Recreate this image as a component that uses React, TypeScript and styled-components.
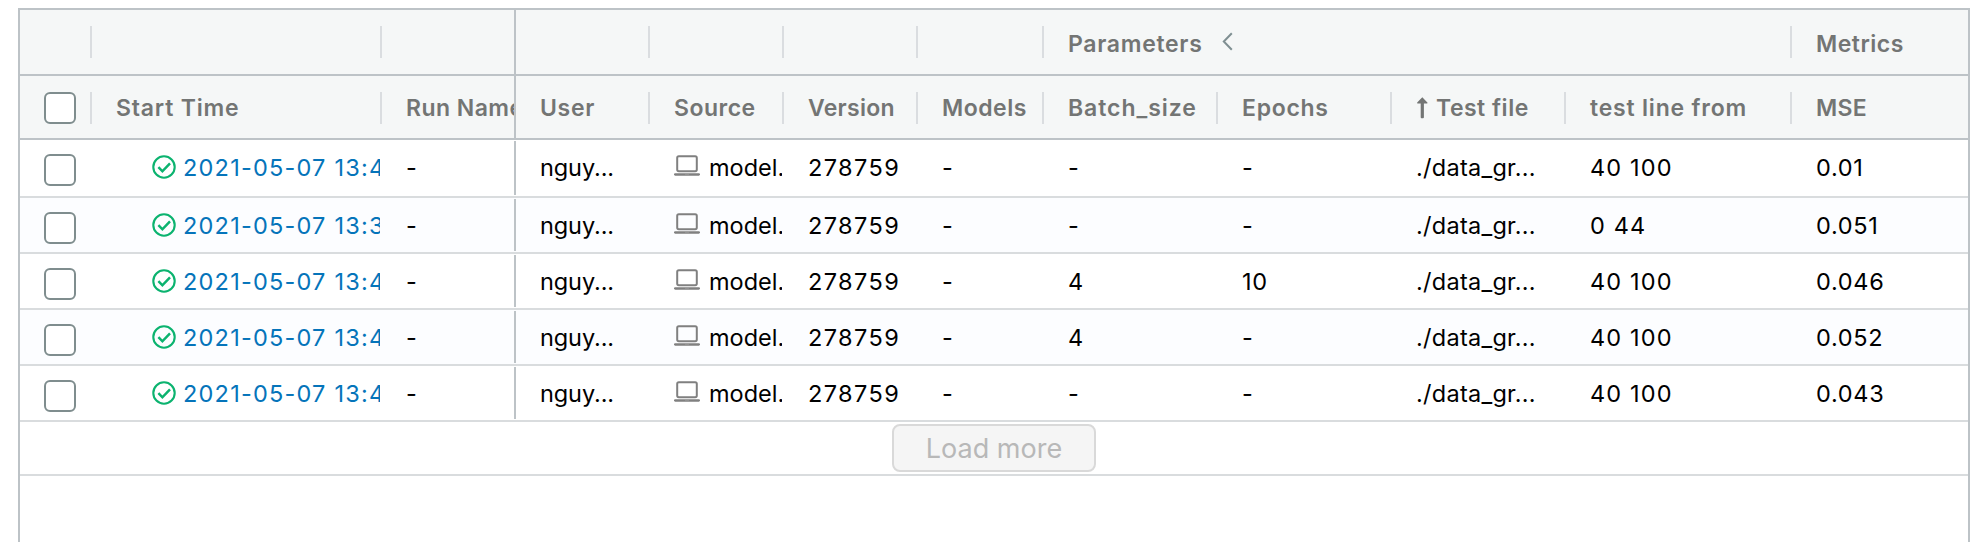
import React from 'react';
import styled, { createGlobalStyle, css } from 'styled-components';

const GlobalStyle = createGlobalStyle`
  *, *::before, *::after { box-sizing: border-box; }
  body {
    margin: 0;
    background: #fff;
    overflow: hidden;
    font-family: Inter, 'Liberation Sans', sans-serif;
  }
`;

const line = '#bdc3c7';
const softLine = '#d9dcde';
const columns = '72px 290px 134px 134px 134px 134px 126px 174px 174px 174px 226px 1fr';

const Page = styled.main`
  padding: 8px 14px 0 18px;
  height: 542px;
`;

const Grid = styled.section`
  height: 534px;
  border: 2px solid ${line};
  border-bottom: 0;
  background: #fff;
`;

const rowBase = css`
  display: grid;
  grid-template-columns: ${columns};
`;

const HeaderRow = styled.div<{ $height: number }>`
  ${rowBase}
  height: ${(p) => p.$height}px;
  border-bottom: 2px solid ${line};
  background: #f5f7f7;
  color: #737574;
  font-size: 23px;
  font-weight: 600;
`;

const HeaderCell = styled.div<{ $span?: number; $pinnedEdge?: boolean; $top?: number; $last?: boolean }>`
  grid-column: span ${(p) => p.$span ?? 1};
  display: flex;
  align-items: center;
  min-width: 0;
  overflow: hidden;
  padding-left: 24px;
  ${(p) =>
    p.$pinnedEdge &&
    css`
      border-right: 2px solid ${line};
    `}
  ${(p) =>
    !p.$pinnedEdge &&
    !p.$last &&
    css`
      &::after {
        content: '';
        flex: none;
        width: 2px;
        height: 32px;
        margin: ${p.$top ?? 0}px 0 0 auto;
        background: #dadde0;
      }
    `}
`;

const Label = styled.span<{ $tracking?: number; $drop?: number }>`
  display: flex;
  align-items: center;
  white-space: nowrap;
  line-height: 30px;
  letter-spacing: ${(p) => p.$tracking ?? 0.7}px;
  padding-top: ${(p) => p.$drop ?? 2}px;
  margin-right: -12px;
`;

const Row = styled.div<{ $first?: boolean; $striped?: boolean }>`
  ${rowBase}
  height: ${(p) => (p.$first ? 58 : 56)}px;
  border-bottom: 2px solid ${softLine};
  background: ${(p) => (p.$striped ? '#fcfdff' : '#fff')};
  color: #000;
  font-size: 23.5px;
`;

const Cell = styled.div<{ $tracking?: number; $pinnedEdge?: boolean; $inset?: number; $trim?: number }>`
  display: flex;
  min-width: 0;
  overflow: hidden;
  white-space: nowrap;
  line-height: 55px;
  padding-left: ${(p) => p.$inset ?? 24}px;
  margin-right: ${(p) => p.$trim ?? 0}px;
  letter-spacing: ${(p) => p.$tracking ?? 0}px;
  ${(p) =>
    p.$pinnedEdge &&
    css`
      margin: 1px 0;
      line-height: 53px;
      border-right: 2px solid ${line};
    `}
`;

const CheckCell = styled.div<{ $top: number }>`
  display: flex;
  justify-content: space-between;
  padding: ${(p) => p.$top}px 0 0 24px;
`;

const Checkbox = styled.span`
  width: 32px;
  height: 32px;
  border: 2px solid #7f8d8e;
  border-radius: 6px;
  background: #fff;
`;

const Separator = styled.span`
  width: 2px;
  height: 32px;
  background: #dadde0;
`;

const RunLink = styled.a`
  color: #0574ba;
  padding-left: 7px;
`;

const StatusIcon = styled.svg`
  flex: none;
  width: 24px;
  height: 24px;
  margin-top: 15px;
`;

const LaptopIcon = styled.svg`
  flex: none;
  width: 26px;
  height: 22px;
  margin: 15px 9px 0 0;
`;

const Chevron = styled.svg`
  width: 11px;
  height: 19px;
  margin: -4px 0 0 19px;
`;

const SortArrow = styled.svg`
  width: 12px;
  height: 22px;
  margin-right: 8px;
`;

const Footer = styled.div`
  display: flex;
  justify-content: center;
  height: 54px;
  padding-top: 2px;
  border-bottom: 2px solid ${softLine};
`;

const LoadMore = styled.button`
  width: 204px;
  height: 48px;
  padding: 1px 0 0;
  border: 2px solid #d9d9d9;
  border-radius: 8px;
  background: #f5f5f5;
  color: #b8b8b8;
  font: 400 27px/43px Inter, 'Liberation Sans', sans-serif;
`;

interface Run {
  start: string;
  batch: string;
  epochs: string;
  lines: string;
  mse: string;
}

const runs: Run[] = [
  { start: '2021-05-07 13:4', batch: '-', epochs: '-', lines: '40 100', mse: '0.01' },
  { start: '2021-05-07 13:3', batch: '-', epochs: '-', lines: '0 44', mse: '0.051' },
  { start: '2021-05-07 13:4', batch: '4', epochs: '10', lines: '40 100', mse: '0.046' },
  { start: '2021-05-07 13:4', batch: '4', epochs: '-', lines: '40 100', mse: '0.052' },
  { start: '2021-05-07 13:4', batch: '-', epochs: '-', lines: '40 100', mse: '0.043' },
];

const GroupHeader = () => (
  <HeaderRow $height={66}>
    <HeaderCell />
    <HeaderCell />
    <HeaderCell $pinnedEdge />
    <HeaderCell />
    <HeaderCell />
    <HeaderCell />
    <HeaderCell />
    <HeaderCell $span={4}>
      <Label $drop={3}>
        Parameters
        <Chevron viewBox="0 0 11 19" fill="none" stroke="#7f8f92" strokeWidth="2">
          <path d="M9.8 1.2 1.8 9.5l8 8.3" />
        </Chevron>
      </Label>
    </HeaderCell>
    <HeaderCell $last>
      <Label $tracking={0.5} $drop={3}>Metrics</Label>
    </HeaderCell>
  </HeaderRow>
);

const ColumnHeader = () => (
  <HeaderRow $height={64}>
    <CheckCell $top={16}>
      <Checkbox />
      <Separator />
    </CheckCell>
    <HeaderCell $top={2}><Label $tracking={0.8}>Start Time</Label></HeaderCell>
    <HeaderCell $pinnedEdge><Label $tracking={0.45}>Run Name</Label></HeaderCell>
    <HeaderCell $top={2}><Label $tracking={0.7}>User</Label></HeaderCell>
    <HeaderCell $top={2}><Label $tracking={0.5}>Source</Label></HeaderCell>
    <HeaderCell $top={2}><Label $tracking={0.3}>Version</Label></HeaderCell>
    <HeaderCell $top={2}><Label $tracking={0.5}>Models</Label></HeaderCell>
    <HeaderCell $top={2}><Label $tracking={0.95}>Batch_size</Label></HeaderCell>
    <HeaderCell $top={2}><Label>Epochs</Label></HeaderCell>
    <HeaderCell $top={2}>
      <Label $tracking={0.5}>
        <SortArrow viewBox="0 0 12 22" fill="#737574">
          <path d="M6.3.3 11.4 5.5q.6 1-.6 1H7.9v13.8q0 .9-.9.9H5.6q-.9 0-.9-.9V6.5H1.8Q.6 6.5 1.2 5.5z" />
        </SortArrow>
        Test file
      </Label>
    </HeaderCell>
    <HeaderCell $top={2}><Label $tracking={0.8}>test line from</Label></HeaderCell>
    <HeaderCell $last><Label $tracking={0.3}>MSE</Label></HeaderCell>
  </HeaderRow>
);

const RunRow = ({ run, index }: { run: Run; index: number }) => (
  <Row $first={index === 0} $striped={index % 2 === 1}>
    <CheckCell $top={14}>
      <Checkbox />
    </CheckCell>
    <Cell $inset={60} $trim={2} $tracking={1.22}>
      <StatusIcon viewBox="0 0 24 24" fill="none" stroke="#0bb36f" strokeWidth="2.1">
        <circle cx="12" cy="12" r="10.7" />
        <path d="m6.4 12.2 4 4.1L18 8.3" strokeWidth="2.5" />
      </StatusIcon>
      <RunLink>{run.start}</RunLink>
    </Cell>
    <Cell $pinnedEdge>-</Cell>
    <Cell $tracking={-0.1}>nguy...</Cell>
    <Cell $trim={2}>
      <LaptopIcon viewBox="0 0 26 22" fill="none" stroke="#808080" strokeWidth="2">
        <rect x="3.2" y="1.2" width="19.6" height="15" rx="1.6" />
        <path d="M1.2 19.4h23.6" strokeWidth="2.5" strokeLinecap="round" />
        <path d="M11 19h4" stroke="#a0a0a0" strokeWidth="1" />
      </LaptopIcon>
      model.
    </Cell>
    <Cell $tracking={1.4}>278759</Cell>
    <Cell>-</Cell>
    <Cell>{run.batch}</Cell>
    <Cell $tracking={0.8}>{run.epochs}</Cell>
    <Cell $tracking={0.27}>./data_gr...</Cell>
    <Cell $tracking={1.15}>{run.lines}</Cell>
    <Cell $tracking={0.7}>{run.mse}</Cell>
  </Row>
);

export default function App() {
  return (
    <Page>
      <GlobalStyle />
      <Grid>
        <GroupHeader />
        <ColumnHeader />
        {runs.map((run, i) => (
          <RunRow key={i} run={run} index={i} />
        ))}
        <Footer>
          <LoadMore disabled>Load more</LoadMore>
        </Footer>
      </Grid>
    </Page>
  );
}
